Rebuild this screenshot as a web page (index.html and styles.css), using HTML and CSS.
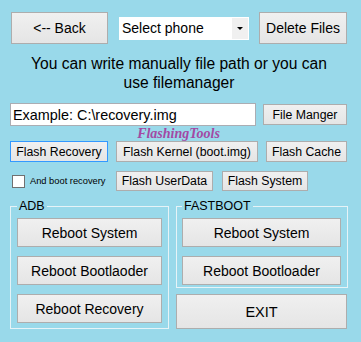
FILE: index.html
```html
<!DOCTYPE html>
<html lang="en">
<head>
    <meta charset="UTF-8">
    <title>FlashingTools</title>
    <link rel="stylesheet" href="styles.css">
</head>
<body>

<div id="app">

    <!--top bar-->
    <div class="top-bar">
        <button class="btn btn-back">&lt;-- Back</button>
        <div class="combo">
            <span class="combo-text">Select phone</span>
            <span class="combo-arrow"></span>
        </div>
        <button class="btn btn-delete">Delete Files</button>
    </div>

    <p class="hint">You can write manually file path or you can<br>use filemanager</p>

    <!--file path row-->
    <div class="path-row">
        <input class="path-input" type="text" value="Example: C:\recovery.img">
        <button class="btn btn-small btn-manager">File Manger</button>
    </div>

    <div class="brand">FlashingTools</div>

    <!--flash buttons-->
    <div class="flash-row">
        <button class="btn btn-small btn-focus w-recovery">Flash Recovery</button>
        <button class="btn btn-small w-kernel">Flash Kernel (boot.img)</button>
        <button class="btn btn-small w-cache">Flash Cache</button>
    </div>

    <div class="flash-row second">
        <label class="check">
            <span class="check-box"></span>
            <span class="check-text">And boot recovery</span>
        </label>
        <button class="btn btn-small w-userdata">Flash UserData</button>
        <button class="btn btn-small w-system">Flash System</button>
    </div>

    <!--reboot groups-->
    <div class="groups">
        <fieldset class="group group-adb">
            <legend>ADB</legend>
            <button class="btn btn-reboot">Reboot System</button>
            <button class="btn btn-reboot">Reboot Bootlaoder</button>
            <button class="btn btn-reboot">Reboot Recovery</button>
        </fieldset>

        <div class="right-col">
            <fieldset class="group group-fastboot">
                <legend>FASTBOOT</legend>
                <button class="btn btn-reboot">Reboot System</button>
                <button class="btn btn-reboot">Reboot Bootloader</button>
            </fieldset>
            <button class="btn btn-exit">EXIT</button>
        </div>
    </div>

</div>

</body>
</html>
```

FILE: styles.css
```css
/*reset*/
* {
    margin: 0;
    padding: 0;
    box-sizing: border-box;
}

body {
    background-color: #99d9ea;
    font-family: "Liberation Sans", Arial, sans-serif;
    color: #000;
}

#app {
    width: 361px;
    height: 342px;
    display: flex;
    flex-direction: column;
}

/*windows style button*/
.btn {
    font-family: "Liberation Sans", Arial, sans-serif;
    font-size: 14px;
    color: #000;
    background: linear-gradient(#f0f0f0, #e5e5e5);
    border: 1px solid #adadad;
    display: flex;
    align-items: center;
    justify-content: center;
    white-space: nowrap;
}

.btn-small {
    font-size: 12.3px;
    height: 21px;
}

.btn-focus {
    border-color: #3399ff;
}

/*top bar*/
.top-bar {
    display: flex;
    align-items: center;
    padding: 12px 0 0 11px;
}

.btn-back {
    width: 97px;
    height: 32px;
}

.combo {
    width: 130px;
    height: 23px;
    margin-left: 11px;
    background-color: #fff;
    border: 1px solid #fff;
    display: flex;
}

.combo-text {
    flex: 1;
    font-size: 14px;
    line-height: 21px;
    padding-left: 2px;
}

.combo-arrow {
    width: 16px;
    background-color: #f0f0f0;
    display: flex;
    align-items: center;
    justify-content: center;
}

.combo-arrow::after {
    content: "";
    border-left: 3px solid transparent;
    border-right: 3px solid transparent;
    border-top: 3px solid #000;
}

.btn-delete {
    width: 88px;
    height: 32px;
    margin-left: 10px;
}

/*hint text*/
.hint {
    margin-top: 11px;
    font-size: 15.6px;
    line-height: 18.5px;
    text-align: center;
    padding-right: 3px;
}

/*path row*/
.path-row {
    display: flex;
    align-items: center;
    margin-top: 11px;
    padding-left: 10px;
}

.path-input {
    width: 246px;
    height: 23px;
    border: 1px solid #abadb3;
    font-family: "Liberation Sans", Arial, sans-serif;
    font-size: 14.4px;
    padding-left: 2px;
    outline: none;
}

.btn-manager {
    width: 84px;
    margin-left: 7px;
}

.brand {
    font-family: "Liberation Serif", "Times New Roman", serif;
    font-size: 14px;
    font-weight: bold;
    font-style: italic;
    color: #a349a4;
    line-height: 15px;
    text-align: center;
    padding-right: 4px;
}

/*flash buttons*/
.flash-row {
    display: flex;
    align-items: center;
    gap: 8px;
    padding-left: 10px;
}

.flash-row.second {
    margin-top: 9px;
    gap: 9px;
}

.flash-row.second .btn {
    height: 20px;
}

.w-recovery { width: 98px; }
.w-kernel { width: 142px; }
.w-cache { width: 81px; }
.w-userdata { width: 97px; }
.w-system { width: 86px; }

.check {
    width: 97px;
    display: flex;
    align-items: center;
    padding-left: 2px;
}

.check-box {
    width: 13px;
    height: 13px;
    background-color: #fff;
    border: 1px solid #707070;
}

.check-text {
    font-size: 9.3px;
    margin-left: 5px;
}

/*group boxes*/
.groups {
    display: flex;
    align-items: flex-start;
    margin-top: 8px;
    padding-left: 10px;
}

.group {
    border: 1px solid #e6f3f7;
    padding: 5px 6px 5px 6px;
    display: flex;
    flex-direction: column;
    gap: 9px;
}

.group legend {
    font-size: 12.5px;
    line-height: 14px;
    padding: 0 2px;
}

.group-adb {
    width: 159px;
}

.btn-reboot {
    width: 145px;
    height: 29px;
}

.right-col {
    margin-left: 7px;
    display: flex;
    flex-direction: column;
}

.group-fastboot {
    width: 172px;
    padding: 5px 6px 2px 5px;
}

.group-fastboot .btn-reboot {
    width: 159px;
}

.btn-exit {
    width: 171px;
    height: 35px;
    margin-top: 6px;
    font-size: 14.5px;
}
```
